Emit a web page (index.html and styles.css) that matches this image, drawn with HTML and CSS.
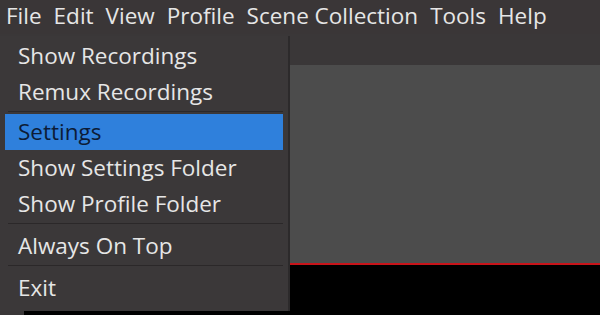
FILE: index.html
```html
<!DOCTYPE html>
<html lang="en">
<head>
    <meta charset="UTF-8">
    <meta name="viewport" content="width=device-width, initial-scale=1.0">
    <title>OBS</title>
    <link rel="stylesheet" href="styles.css">
</head>
<body>
    <div class="app">
        <div class="menubar">
            <span class="menu-title">File</span>
            <span class="menu-title">Edit</span>
            <span class="menu-title">View</span>
            <span class="menu-title">Profile</span>
            <span class="menu-title">Scene Collection</span>
            <span class="menu-title">Tools</span>
            <span class="menu-title">Help</span>
        </div>
        <div class="toolbar"></div>
        <div class="workspace">
            <div class="side-strip"></div>
            <div class="preview-wrap">
                <div class="preview"></div>
                <div class="preview-bottom"></div>
            </div>
        </div>

        <!-- File dropdown -->
        <div class="dropdown">
            <div class="item">Show Recordings</div>
            <div class="item">Remux Recordings</div>
            <div class="separator tight"></div>
            <div class="item active">Settings</div>
            <div class="item">Show Settings Folder</div>
            <div class="item">Show Profile Folder</div>
            <div class="separator"></div>
            <div class="item">Always On Top</div>
            <div class="separator"></div>
            <div class="item">Exit</div>
        </div>
    </div>
</body>
</html>
```

FILE: styles.css
```css
body {
    margin: 0;
    background-color: #000;
    font-family: "Open Sans", "Noto Sans", sans-serif;
    color: #e6e6e6;
}
.app {
    position: relative;
    width: 600px;
    height: 315px;
    overflow: hidden;
    display: flex;
    flex-direction: column;
}
.menubar {
    height: 34px;
    box-sizing: border-box;
    padding-bottom: 3px;
    display: flex;
    align-items: center;
    background-color: #3a3637;
    font-size: 22.5px;
    white-space: nowrap;
}
.menu-title {
    padding: 0 6px;
    line-height: 30px;
}
.toolbar {
    height: 31px;
    background-color: #3a3738;
}
.workspace {
    flex: 1;
    display: flex;
}
.side-strip {
    width: 24px;
    background-color: #3a3738;
}
.preview-wrap {
    flex: 1;
    display: flex;
    flex-direction: column;
}
.preview {
    height: 198px;
    background-color: #4c4c4c;
    border-bottom: 2px solid #c8141a;
}
.preview-bottom {
    flex: 1;
    background-color: #000;
}
.dropdown {
    position: absolute;
    left: 0;
    top: 36px;
    width: 288px;
    padding: 2px 0 5px;
    background-color: #3b3839;
    border-right: 2px solid #2c2a2b;
    font-size: 22.5px;
}
.item {
    height: 36px;
    line-height: 36px;
    margin: 0 5px;
    padding-left: 13px;
    white-space: nowrap;
}
.item.active {
    background-color: #2f80dc;
    color: #0c1b36;
}
.separator {
    height: 1px;
    margin: 1px 5px 4px 8px;
    background-color: #2b2829;
}
.separator.tight {
    margin: 1px 5px 2px 8px;
}
```
